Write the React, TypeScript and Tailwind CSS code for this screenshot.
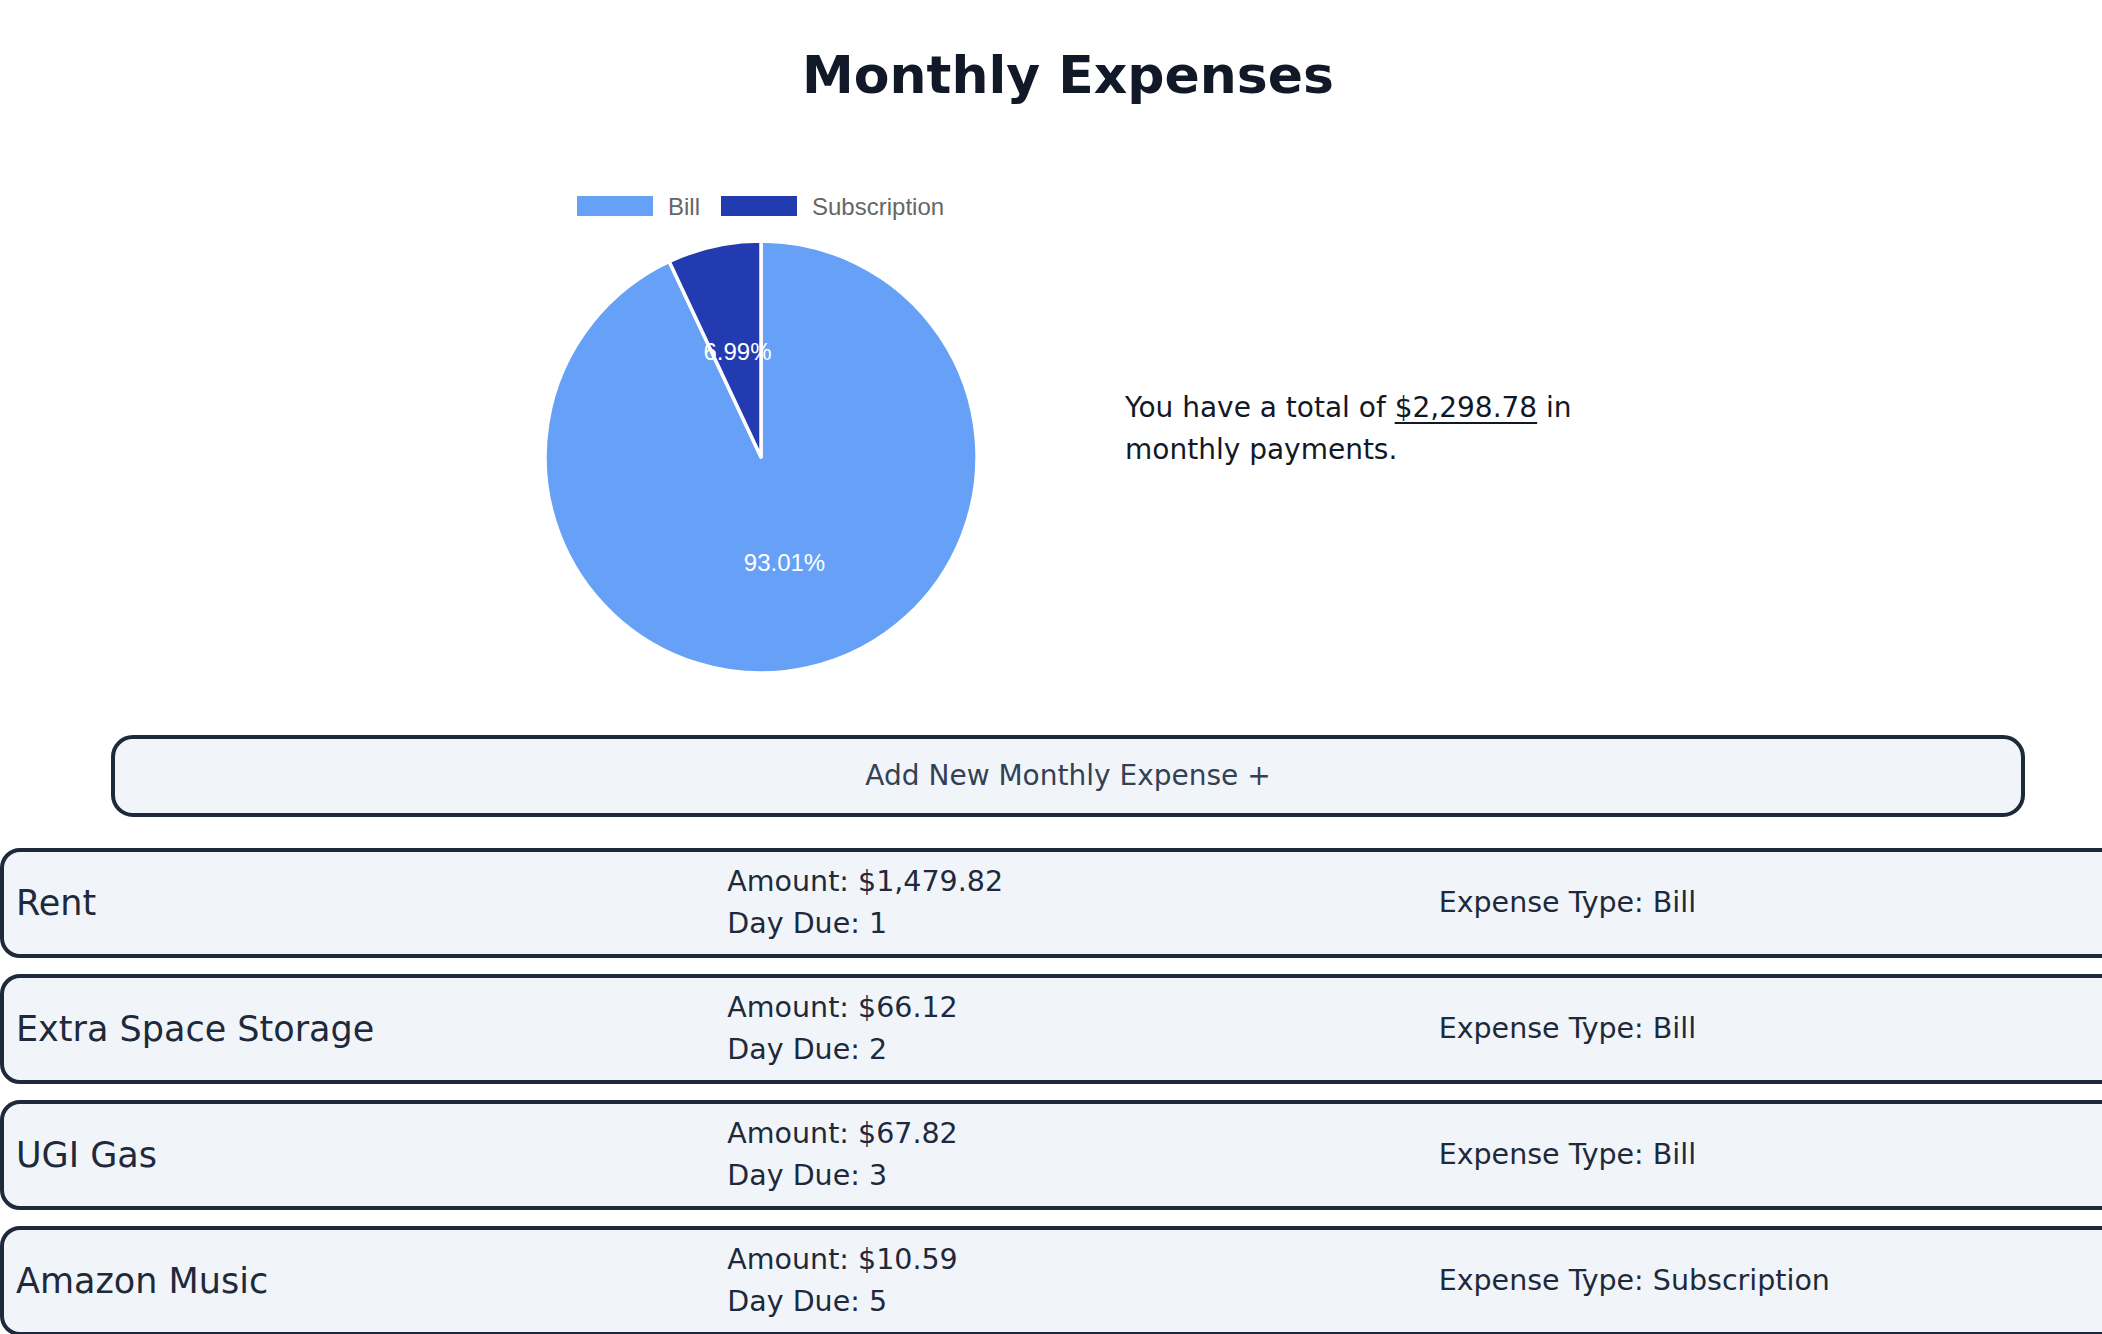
const expenses = [
  { name: 'Rent', amount: '$1,479.82', day: 1, type: 'Bill' },
  { name: 'Extra Space Storage', amount: '$66.12', day: 2, type: 'Bill' },
  { name: 'UGI Gas', amount: '$67.82', day: 3, type: 'Bill' },
  { name: 'Amazon Music', amount: '$10.59', day: 5, type: 'Subscription' },
];

function PieChart() {
  // center (220, 278), radius 216; bill 93.01%, subscription 6.99%
  return (
    <svg width="440" height="500" viewBox="0 0 440 500" className="shrink-0">
      <g fontFamily="'Liberation Sans', Arial, sans-serif" fontSize="24">
        <rect x="36" y="17" width="76" height="20" fill="#66a1f7" />
        <text x="127" y="35.5" fill="#666666">Bill</text>
        <rect x="180" y="17" width="76" height="20" fill="#223bb1" />
        <text x="271" y="35.5" fill="#666666">Subscription</text>
      </g>
      <path d="M220,278 L220,62 A216,216 0 1 1 128.2,82.5 Z" fill="#66a1f7" stroke="#ffffff" strokeWidth="3.5" strokeLinejoin="round" />
      <path d="M220,278 L128.2,82.5 A216,216 0 0 1 220,62 Z" fill="#223bb1" stroke="#ffffff" strokeWidth="3.5" strokeLinejoin="round" />
      <g fontFamily="'Liberation Sans', Arial, sans-serif" fontSize="24" fill="#ffffff" textAnchor="middle">
        <text x="196.5" y="181">6.99%</text>
        <text x="243.5" y="392">93.01%</text>
      </g>
    </svg>
  );
}

function ExpenseRow({ e }: { e: (typeof expenses)[number] }) {
  return (
    <div className="grid w-[2166px] shrink-0 grid-cols-3 items-center rounded-[20px] border-4 border-[#1e293b] bg-[#f1f5f9] px-3 py-[9px] text-[#1e293b]">
      <div className="text-[35px] leading-[42px]">{e.name}</div>
      <div className="text-[28.5px] leading-[42px]">
        <div>Amount: {e.amount}</div>
        <div>Day Due: {e.day}</div>
      </div>
      <div className="text-[28.5px] leading-[42px]">Expense Type: {e.type}</div>
    </div>
  );
}

export default function App() {
  return (
    <div className="h-[1334px] w-full overflow-hidden bg-white font-['DejaVu_Sans',Verdana,sans-serif]">
      <div className="w-[2136px]">
        <h1 className="pt-[43px] text-center text-[52px] font-bold leading-[64px] text-[#111827]">
          Monthly Expenses
        </h1>

        <div className="mt-[72px] flex items-center justify-center gap-[144px]">
          <PieChart />
          <p className="w-[470px] text-[28px] leading-[42px] text-[#111827]">
            You have a total of{' '}
            <span className="underline decoration-2 underline-offset-[5px]">$2,298.78</span> in monthly payments.
          </p>
        </div>

        <div className="mx-[111px] mt-[56px]">
          <button className="h-[82px] w-full rounded-[22px] border-4 border-[#1e293b] bg-[#f1f5f9] text-[28px] text-[#334155]">
            Add New Monthly Expense +
          </button>
        </div>

        <div className="mt-[31px] flex flex-col gap-4">
          {expenses.map((e) => (
            <ExpenseRow key={e.name} e={e} />
          ))}
        </div>
      </div>
    </div>
  );
}
